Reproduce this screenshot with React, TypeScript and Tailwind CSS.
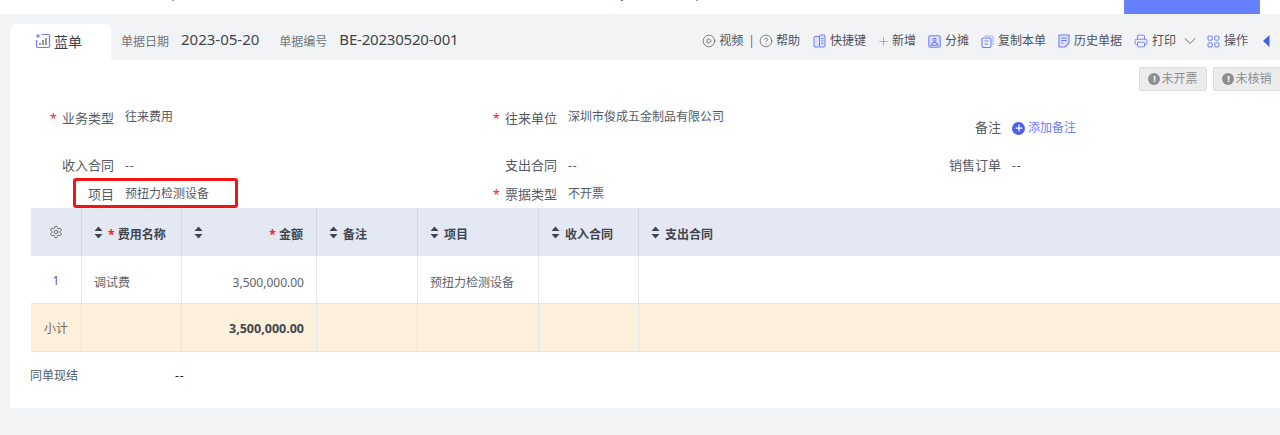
import React from 'react';
import { ChevronDown, CircleHelp, CirclePlay, Plus, Printer, Settings } from 'lucide-react';

const font = { fontFamily: '"Noto Sans", "Noto Sans CJK SC", sans-serif' };

function TabIcon() {
  return (
    <svg width="16" height="16" viewBox="0 0 16 16" fill="none" stroke="#6b7cff" strokeWidth="1.2">
      <path d="M6.5 1.5H13a1.5 1.5 0 0 1 1.5 1.5v10a1.5 1.5 0 0 1-1.5 1.5H3A1.5 1.5 0 0 1 1.5 13V7" />
      <path d="M3 1v4M1 3h4" />
      <path d="M5 12v-2M8 12V7M11 12V5" stroke="#4a5568" />
    </svg>
  );
}

function DocIcon() {
  return (
    <svg width="13" height="14" viewBox="0 0 13 14" fill="#dfe3ff" stroke="#6f7cf5" strokeWidth="1">
      <rect x="1" y="2.5" width="6" height="10.5" rx="1" />
      <rect x="6.5" y="1" width="5.5" height="12" rx="1" />
      <path d="M8.2 4.5h2.2M8.2 7h2.2M8.2 9.5h2.2" />
    </svg>
  );
}

function PictureIcon() {
  return (
    <svg width="13" height="13" viewBox="0 0 13 13" fill="#dfe3ff" stroke="#6b7cff" strokeWidth="1.1">
      <rect x="0.8" y="0.8" width="11.4" height="11.4" rx="1.5" />
      <circle cx="6.5" cy="4.8" r="1.5" fill="none" />
      <path d="M3 10.2 5 7.5h3l2 2.7z" fill="none" />
    </svg>
  );
}

function CopyIcon() {
  return (
    <svg width="13" height="13" viewBox="0 0 13 13" fill="none" stroke="#6b7cff" strokeWidth="1.1">
      <path d="M3.5 1h7.5a1 1 0 0 1 1 1v8" stroke="#a9b2fb" />
      <rect x="1" y="3" width="9" height="9.5" rx="1.5" />
      <path d="M3.5 6h4M3.5 9h4" />
    </svg>
  );
}

function HistoryIcon() {
  return (
    <svg width="12" height="14" viewBox="0 0 12 14" fill="#dfe3ff" stroke="#6f7cf5" strokeWidth="1.1">
      <path d="M1 1h10v8l-4 4H1z" />
      <path d="M3 4h6M3 6.5h6M3 9h2.5" fill="none" />
    </svg>
  );
}

function GridIcon() {
  return (
    <svg width="13" height="13" viewBox="0 0 13 13" fill="none" stroke="#7a86f5" strokeWidth="1.1">
      <rect x="1" y="1" width="4.2" height="4.2" rx="1.2" />
      <rect x="7.8" y="1" width="4.2" height="4.2" rx="1.2" />
      <rect x="1" y="7.8" width="4.2" height="4.2" rx="1.2" />
      <rect x="7.8" y="7.8" width="4.2" height="4.2" rx="1.2" />
    </svg>
  );
}

function SortIcon() {
  return (
    <svg width="9" height="13" viewBox="0 0 9 13" fill="#3f4450" className="shrink-0">
      <path d="M4.5 0.5 8.5 5H0.5z" />
      <path d="M4.5 12.5 0.5 8h8z" />
    </svg>
  );
}

function Star() {
  return <span className="text-[#f5222d]">*</span>;
}

function Field({ label, value, required, labelClass, valueClass }: { label: string; value?: React.ReactNode; required?: boolean; labelClass?: string; valueClass?: string }) {
  return (
    <div className="flex items-start">
      <div className={`w-[104px] flex justify-end items-center gap-[5px] text-[13px] leading-[16px] text-[#555a63] ${labelClass ?? ''}`}>
        {required && <span className="text-[#f5222d] text-[13px] leading-[14px]">*</span>}
        <span>{label}</span>
      </div>
      <div className={`ml-[11px] text-[12px] leading-[16px] text-[#555a63] ${valueClass ?? ''}`}>{value}</div>
    </div>
  );
}

const columns = 'grid grid-cols-[51px_100px_135px_101px_121px_100px_1fr]';

function HeadCell({ children, last, right }: { children?: React.ReactNode; last?: boolean; right?: boolean }) {
  return (
    <div className={`flex items-center pl-[12px] gap-[5px] text-[12px] font-bold text-[#41454d] ${last ? '' : 'border-r border-[#d2d5dc]'} ${right ? 'pr-[13px]' : ''}`}>
      {children}
    </div>
  );
}

function BodyCell({ children, className }: { children?: React.ReactNode; className?: string }) {
  return <div className={`flex items-center text-[12px] border-r border-[#e6e6e6] ${className ?? ''}`}>{children}</div>;
}

function ToolItem({ icon, label, className }: { icon: React.ReactNode; label: string; className?: string }) {
  return (
    <div className={`flex items-center ${className ?? 'gap-[4px]'}`}>
      {icon}
      <span>{label}</span>
    </div>
  );
}

function StatusButton({ label }: { label: string }) {
  return (
    <div className="w-[68px] h-[24px] shrink-0 flex items-center justify-center gap-[1px] bg-[#ececec] border border-[#dcdcdc] rounded-[2px] text-[12px] text-[#8c8c8c]">
      <span className="w-[12px] h-[12px] rounded-full bg-[#8f8f8f] text-white text-[9px] font-bold leading-[12px] text-center">!</span>
      {label}
    </div>
  );
}

export default function App() {
  return (
    <div className="w-[1280px] h-[435px] overflow-hidden bg-[#f2f3f5]" style={font}>
      {/* top strip, bits of the page above are cut off here */}
      <div className="h-[14px] bg-white flex pr-[20px]">
        <span className="ml-[172px] w-[2px] h-[1px] bg-[#a9a0a0]" />
        <span className="ml-[447px] w-[2px] h-[1px] bg-[#6a6f90]" />
        <span className="ml-[73px] w-[2px] h-[1px] bg-[#a9a0a0]" />
        <div className="ml-auto w-[136px] bg-[#6680fb]" />
      </div>

      {/* tab row */}
      <div className="h-[46px] pt-[10px] pl-[10px] flex">
        <div className="w-[101px] h-[36px] pb-[2px] bg-white rounded-t-[6px] flex items-center pl-[25px] gap-[3px] text-[14px] text-[#3c4048]">
          <TabIcon />
          <span>蓝单</span>
        </div>
        <div className="flex items-center h-[36px] ml-[10px] text-[#6f737b] text-[12px]">
          <span>单据日期</span>
          <span className="ml-[12px] -mt-[6px] text-[15px] text-[#41454d]">2023-05-20</span>
          <span className="ml-[20px]">单据编号</span>
          <span className="ml-[12px] -mt-[6px] text-[15px] tracking-[-0.2px] text-[#41454d]">BE-20230520-001</span>
        </div>
        <div className="flex items-center h-[36px] pb-[2px] ml-auto pr-[10px] text-[12px] text-[#4e525a] gap-[12px]">
          <div className="flex items-center gap-[4px]">
            <ToolItem className="gap-[3px]" icon={<CirclePlay size={14} strokeWidth={1.2} color="#555" />} label="视频" />
            <span className="ml-px text-[#666]">|</span>
            <ToolItem className="gap-[3px]" icon={<CircleHelp size={14} strokeWidth={1.2} color="#555" />} label="帮助" />
          </div>
          <ToolItem className="gap-[4px] ml-px" icon={<DocIcon />} label="快捷键" />
          <ToolItem className="gap-[2px]" icon={<Plus size={13} strokeWidth={1.2} color="#6b7cff" className="-ml-px" />} label="新增" />
          <ToolItem icon={<PictureIcon />} label="分摊" />
          <ToolItem icon={<CopyIcon />} label="复制本单" />
          <ToolItem icon={<HistoryIcon />} label="历史单据" />
          <div className="flex items-center gap-[4px] -mr-[5px]">
            <ToolItem icon={<Printer size={14} strokeWidth={1.5} color="#6b7cff" />} label="打印" />
            <ChevronDown size={20} strokeWidth={1} color="#555" />
          </div>
          <ToolItem icon={<GridIcon />} label="操作" />
          <svg width="7" height="12" viewBox="0 0 7 12" fill="#3f5fe0" className="ml-[3px]">
            <path d="M6.5 0v12L0 6z" />
          </svg>
        </div>
      </div>

      {/* panel */}
      <div className="ml-[10px] h-[348px] bg-white flex flex-col">
        <div className="flex justify-end gap-[6px] pt-[7px] -mr-px">
          <StatusButton label="未开票" />
          <StatusButton label="未核销" />
        </div>

        <div className="grid grid-cols-[443px_444px_1fr] mt-[18px]">
          <Field label="业务类型" value="往来费用" required labelClass="pt-px" />
          <Field label="往来单位" value="深圳市俊成五金制品有限公司" required labelClass="pt-px" />
          <div className="flex items-center mt-[10px]">
            <div className="w-[104px] pb-[2px] text-right text-[13px] leading-[16px] text-[#555a63]">备注</div>
            <div className="ml-[11px] flex items-center gap-[3px] text-[12px] leading-[16px] text-[#6b7cff]">
              <span className="w-[13px] h-[13px] rounded-full bg-[#4f5fe8] flex items-center justify-center">
                <Plus size={10} strokeWidth={3} color="white" />
              </span>
              添加备注
            </div>
          </div>
        </div>

        <div className="grid grid-cols-[443px_444px_1fr] mt-[20px]">
          <Field label="收入合同" value="--" valueClass="mt-px tracking-[1px]" />
          <Field label="支出合同" value="--" valueClass="mt-px tracking-[1px]" />
          <Field label="销售订单" value="--" valueClass="mt-px tracking-[1px]" />
        </div>

        <div className="grid grid-cols-[443px_444px_1fr] mt-[11px] relative">
          <Field label="项目" value="预扭力检测设备" labelClass="pt-px" valueClass="mt-px" />
          <Field label="票据类型" value="不开票" required labelClass="pt-px" valueClass="mt-px" />
          {/* red annotation box from the source screenshot */}
          <div className="absolute left-[63px] top-[-7px] w-[165px] h-[30px] border-[3px] border-[#f01414] rounded-[3px]" />
        </div>

        {/* table */}
        <div className="ml-[21px] mt-[6px]">
          <div className={`${columns} h-[48px] bg-[#e4e8f3]`}>
            <div className="flex items-center justify-center border-r border-[#d2d5dc]">
              <Settings size={14} strokeWidth={1.4} color="#555" />
            </div>
            <HeadCell><SortIcon /><span className="mt-[6px]"><Star /> 费用名称</span></HeadCell>
            <HeadCell right><SortIcon /><span className="ml-auto mt-[6px]"><Star /> 金额</span></HeadCell>
            <HeadCell><SortIcon /><span className="mt-[6px]">备注</span></HeadCell>
            <HeadCell><SortIcon /><span className="mt-[6px]">项目</span></HeadCell>
            <HeadCell><SortIcon /><span className="mt-[6px]">收入合同</span></HeadCell>
            <HeadCell last><SortIcon /><span className="mt-[6px]">支出合同</span></HeadCell>
          </div>
          <div className={`${columns} h-[47px] text-[#5f636b]`}>
            <BodyCell className="justify-center pt-[3px]">1</BodyCell>
            <BodyCell className="pl-[12px] pt-[6px]">调试费</BodyCell>
            <BodyCell className="justify-end pr-[12px] pt-[6px]">3,500,000.00</BodyCell>
            <BodyCell />
            <BodyCell className="pl-[12px] pt-[6px]">预扭力检测设备</BodyCell>
            <BodyCell />
            <div />
          </div>
          <div className={`${columns} h-[49px] bg-[#fdf0da] border-y border-[#e6e6e6] text-[#6f6a60]`}>
            <BodyCell className="justify-center pt-[3px]">小计</BodyCell>
            <BodyCell />
            <BodyCell className="justify-end pr-[12px] pt-[3px] font-bold text-[#41454d]">
              <span className="text-[12.5px]">3,500,000.00</span>
            </BodyCell>
            <BodyCell />
            <BodyCell />
            <BodyCell />
            <div />
          </div>
        </div>

        <div className="flex items-center mt-[16px] ml-[20px] text-[12px] leading-[16px] text-[#555a63]">
          <span className="w-[145px]">同单现结</span>
          <span className="text-[#222] tracking-[1px]">--</span>
        </div>
      </div>
    </div>
  );
}
